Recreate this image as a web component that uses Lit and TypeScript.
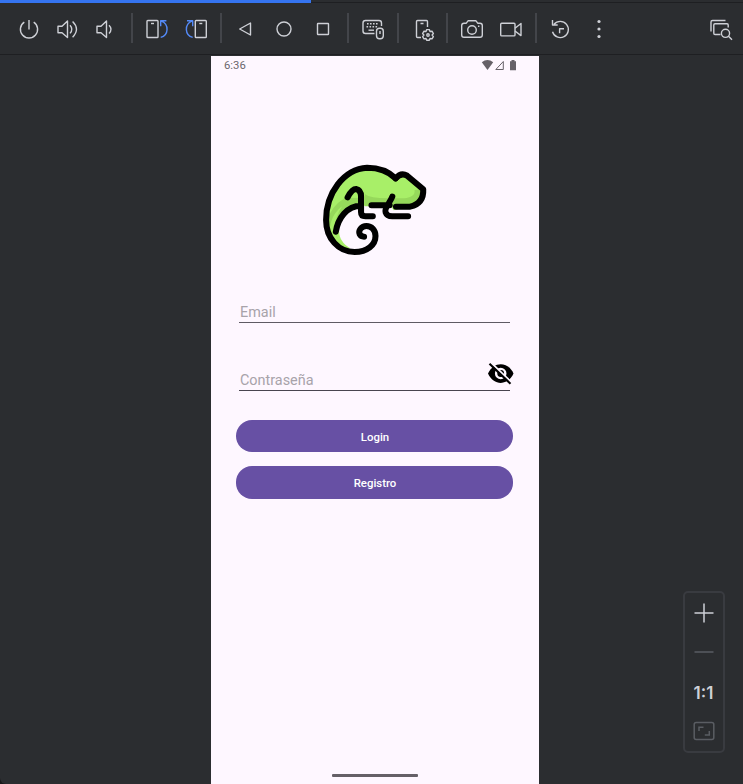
import { LitElement, html, css, svg } from "lit";
import { customElement } from "lit/decorators.js";

type Tool = { label: string; x: number; art: unknown };

const tool = (label: string, x: number, art: unknown): Tool => ({ label, x, art });

const groups: Tool[][] = [
  [
    tool("Power", 16, svg`<path d="M24.3 22.2A8.6 8.6 0 1 0 33.7 22.2M29 20V29.5"/>`),
    tool("Volume up", 55, svg`<path d="M58 26.2H62L67.5 21V37.5L62 32.8H58ZM70 25.2Q73.6 29.2 70 33.4M72.6 21.6Q80.4 29.3 72.6 37.2"/>`),
    tool("Volume down", 94, svg`<path d="M97 26.2H101L106.5 21V37.5L101 32.8H97ZM109 25.2Q113 29.2 109 33.4"/>`),
  ],
  [
    tool("Rotate left", 144, svg`<rect x="147" y="20.5" width="11" height="17" rx=".8"/><path d="M151 23.5H154"/><path class="blue" d="M160.7 37.4C168.8 35.2 169.2 24.5 161.5 21.2M166.4 20.7H160.7V26.2"/>`),
    tool("Rotate right", 183, svg`<rect x="195.3" y="20.5" width="11" height="17" rx=".8"/><path d="M199.3 23.5H202.3"/><path class="blue" d="M192.7 37.4C184.6 35.2 184.2 24.5 191.9 21.2M187 20.7H192.7V26.2"/>`),
  ],
  [
    tool("Back", 232, svg`<path d="M239.7 29L250.5 23V35Z"/>`),
    tool("Home", 271, svg`<circle cx="284" cy="29" r="7"/>`),
    tool("Overview", 310, svg`<rect x="317.5" y="23.5" width="11" height="11" rx=".5"/>`),
  ],
  [
    tool("Hardware input", 360, svg`<path d="M374.5 33.5H365.5Q363 33.5 363 31V23Q363 20.5 365.5 20.5H379Q381.5 20.5 381.5 23V26"/><path stroke-dasharray="1.6 1.4" d="M367 23.7H379M366.5 26.8H378"/><path d="M368.5 30.2H374"/><rect x="376.5" y="28.3" width="6.8" height="10.5" rx="3"/><path d="M380 31V34"/>`),
  ],
  [
    tool("Device settings", 410, svg`<path d="M421 37.5H417.5Q416.5 37.5 416.5 36.5V21.5Q416.5 20.5 417.5 20.5H426.5Q427.5 20.5 427.5 21.5V27M420.5 23.5H423.5"/><path d="M426.7 29.6H429.3L430 31.5L432 31.2L433.4 33.5L432.1 35L433.4 36.6L432 38.9L430 38.5L429.3 40.3H426.7L426 38.5L424 38.9L422.6 36.6L423.9 35L422.6 33.5L424 31.2L426 31.5Z"/><circle cx="428" cy="35" r="1.2"/>`),
  ],
  [
    tool("Screenshot", 459, svg`<path d="M464 23.2H466.3L468.2 20.7H475.8L477.7 23.2H480Q482.3 23.2 482.3 25.5V35Q482.3 37.3 480 37.3H464Q461.7 37.3 461.7 35V25.5Q461.7 23.2 464 23.2Z"/><circle cx="472" cy="30" r="4.3"/><path d="M478 26.3H479.4"/>`),
    tool("Record", 498, svg`<rect x="500.7" y="23.3" width="14.3" height="12.6" rx="1"/><path d="M515 28.2L521 23.5V35.6L515 31"/>`),
  ],
  [
    tool("Reset", 547, svg`<path d="M554 24.3A8.1 8.1 0 1 1 552.5 31.8M552.5 20V25H557.7M559.6 33.3V28.8H564"/>`),
    tool("More", 586, svg`<g class="solid"><circle cx="599" cy="21.5" r="1.6"/><circle cx="599" cy="29" r="1.6"/><circle cx="599" cy="36.5" r="1.6"/></g>`),
  ],
];

const inspect = tool("Inspect", 708, svg`<path d="M711 31.5V22Q711 20.5 712.5 20.5H725.5M720.5 34.5H715Q713.8 34.5 713.8 33.3V24.9Q713.8 23.7 715 23.7H727Q728.2 23.7 728.2 24.9V27.5"/><circle cx="725.5" cy="33.3" r="4.1"/><path d="M728.5 36.3L732 39.7"/>`);

@customElement("app-root")
export class AppRoot extends LitElement {
  static styles = css`
    :host { display: block; background: #17181a; }
    * { box-sizing: border-box; }
    .window { width: 743px; height: 784px; display: flex; flex-direction: column; background: #2b2d30; overflow: hidden; border-bottom-left-radius: 6px; }
    .progress { height: 3px; flex: none; background: linear-gradient(#2b2d30 2px, #1e1f22 2px); }
    .progress-fill { width: 310.5px; height: 3px; background: #3574f0; }
    .toolbar { height: 52px; flex: none; display: flex; align-items: flex-start; padding: 10px 9px 0 16px; border-bottom: 1px solid #1e1f22; }
    .group { display: flex; gap: 13px; padding-top: 3px; }
    .sep { width: 2px; height: 30px; background: #43454a; margin: 0 11px; }
    .tight-right { margin-right: 10px; }
    .tight-left { margin-left: 10px; }
    .spring { flex: 1; }
    .icon { display: block; width: 26px; height: 26px; fill: none; stroke: #ced0d6; stroke-width: 1.4; stroke-linejoin: round; }
    .blue { stroke: #548af7; }
    .solid { fill: #ced0d6; stroke: none; }
    .stage { flex: 1; display: grid; grid-template-columns: 211px 328px 1fr; padding-top: 1px; }
    .phone { grid-column: 2; background: #fef7ff; display: flex; flex-direction: column; font-family: Roboto, sans-serif; }
    .status { height: 20px; display: flex; align-items: center; justify-content: space-between; padding: 0 22px 2px 13px; font-size: 11.3px; color: #6c676e; }
    .signals { width: 36px; height: 12px; }
    .logo { width: 121px; height: 110px; margin: 79px 0 0 104px; }
    .form { display: flex; flex-direction: column; padding: 0 26px 0 25px; }
    .field { height: 34px; margin: 0 3px; border-bottom: 1px solid #5f5b64; display: flex; align-items: center; justify-content: space-between; color: #a8a3aa; font-size: 14.4px; padding: 13px 0 0 1px; }
    .email { margin-top: 24px; }
    .password { margin-top: 34px; border-color: #49454f; }
    .eye { width: 28px; height: 26px; margin: -13px -4px 0 0; flex: none; }
    .btn { height: 32px; border-radius: 16px; background: #6750a4; color: #fff; font: 500 11.4px Roboto, sans-serif; display: flex; align-items: center; justify-content: center; border: 0; padding: 1px 0 0 1px; }
    .login { margin-top: 29px; }
    .register { margin-top: 14px; height: 32.5px; }
    .home { width: 86px; height: 3px; border-radius: 1px; background: #656067; margin: auto auto 7px; }
    .side { display: flex; flex-direction: column; justify-content: flex-end; align-items: flex-end; padding: 0 18px 31px 0; }
    .zoom { width: 42px; height: 162px; border: 2px solid #393b40; border-radius: 5px; display: flex; flex-direction: column; align-items: center; padding-right: 1px; }
    .zoom-icon { width: 24px; height: 24px; fill: none; stroke: #ced0d6; stroke-width: 1.5; flex: none; }
    .plus { margin-top: 8px; }
    .minus { margin-top: 15px; stroke: #5a5d63; }
    .ratio { margin-top: 18px; height: 22px; font: 600 17px/22px Inter, sans-serif; color: #ced0d6; }
    .fit { margin-top: 15px; stroke: #5a5d63; }
  `;

  private icon(t: Tool) {
    return html`<svg class="icon" viewBox="${t.x} 16 26 26" role="img" aria-label=${t.label}>${t.art}</svg>`;
  }

  private separator(index: number) {
    const variant = index === 2 || index === 6 ? "tight-right" : index === 5 ? "tight-left" : "";
    return html`<div class="sep ${variant}"></div>`;
  }

  render() {
    return html`
      <div class="window">
        <div class="progress"><div class="progress-fill"></div></div>
        <div class="toolbar">
          ${groups.map((g, i) => html`${i ? this.separator(i) : ""}<div class="group">${g.map((t) => this.icon(t))}</div>`)}
          <div class="spring"></div>
          <div class="group">${this.icon(inspect)}</div>
        </div>
        <div class="stage">
          <div class="phone">
            <div class="status">
              <span>6:36</span>
              <svg class="signals" viewBox="481 59 36 12">
                <path fill="#666168" d="M481.8 62.2Q487.5 58 493.2 62.2L487.5 70Z"/>
                <path fill="none" stroke="#666168" d="M503.3 61.5V69.5H495.8Z"/>
                <path fill="#666168" d="M510 61.2H511.5V60H514.5V61.2H516V70.3H510Z"/>
              </svg>
            </div>
            <svg class="logo" viewBox="0 0 360 330" preserveAspectRatio="none">
              <path fill="#a8ef68" d="M240 70C215 45 180 38 155 38C85 42 33 115 33 195C33 250 68 286 105 280C82 266 72 248 72 230C68 190 95 152 137 152H225L234 166L283 154Q320 145 322 103L272 62Q258 52 240 70Z"/>
              <path fill="#96d85b" d="M137 129V150Q85 150 60 220Q64 270 105 282Q40 278 36 200Q45 155 90 128ZM148 117Q165 131 225 130H265Q300 126 296 105L322 103Q320 145 283 154H148Z"/>
              <path fill="#a8ef68" d="M48 200Q58 170 81 154Q61 180 58 228Q70 270 105 282Q48 270 44 220Z"/>
              <g fill="none" stroke="#000" stroke-width="18" stroke-linecap="round" stroke-linejoin="round">
                <path d="M240 70C215 45 180 38 155 38C85 42 33 115 33 195C33 250 70 291 118 291C155 291 180 270 180 243C180 225 168 213 153 213C138 213 128 227 133 238Q137 245 146 245"/>
                <path d="M240 70Q256 51 274 62L322 103Q324 145 283 155H241M62 230C68 190 95 152 137 152M97 127Q110 102 122 102Q137 105 137 125V172Q137 184 150 184H172M168 151H222M230 125C225 140 205 160 210 172Q214 184 230 184H277"/>
              </g>
            </svg>
            <div class="form">
              <div class="field email"><span>Email</span></div>
              <div class="field password">
                <span>Contraseña</span>
                <svg class="eye" viewBox="486 361 28 26">
                  <path d="M488 373.5C493.5 361 508 361 513.5 373.5C508 386 493.5 386 488 373.5Z"/>
                  <circle cx="500.7" cy="373.5" r="4.6" fill="none" stroke="#fef7ff" stroke-width="2.4"/>
                  <path d="M490.5 362.3L511.5 382.4" stroke="#fef7ff" stroke-width="2"/>
                  <path d="M489.5 363.7L510.5 383.8" stroke="#000" stroke-width="2.1"/>
                </svg>
              </div>
              <button class="btn login">Login</button>
              <button class="btn register">Registro</button>
            </div>
            <div class="home"></div>
          </div>
          <div class="side">
            <div class="zoom">
              <svg class="zoom-icon plus" viewBox="0 0 24 24"><path d="M12 2.5V21.5M2.5 12H21.5"/></svg>
              <svg class="zoom-icon minus" viewBox="0 0 24 24"><path d="M2.5 12H21.5"/></svg>
              <div class="ratio">1:1</div>
              <svg class="zoom-icon fit" viewBox="0 0 24 24"><rect x="2.2" y="3.5" width="19.6" height="17" rx="2"/><path d="M7 12V8.2H11.5M17.3 12V16H12.8"/></svg>
            </div>
          </div>
        </div>
      </div>
    `;
  }
}
